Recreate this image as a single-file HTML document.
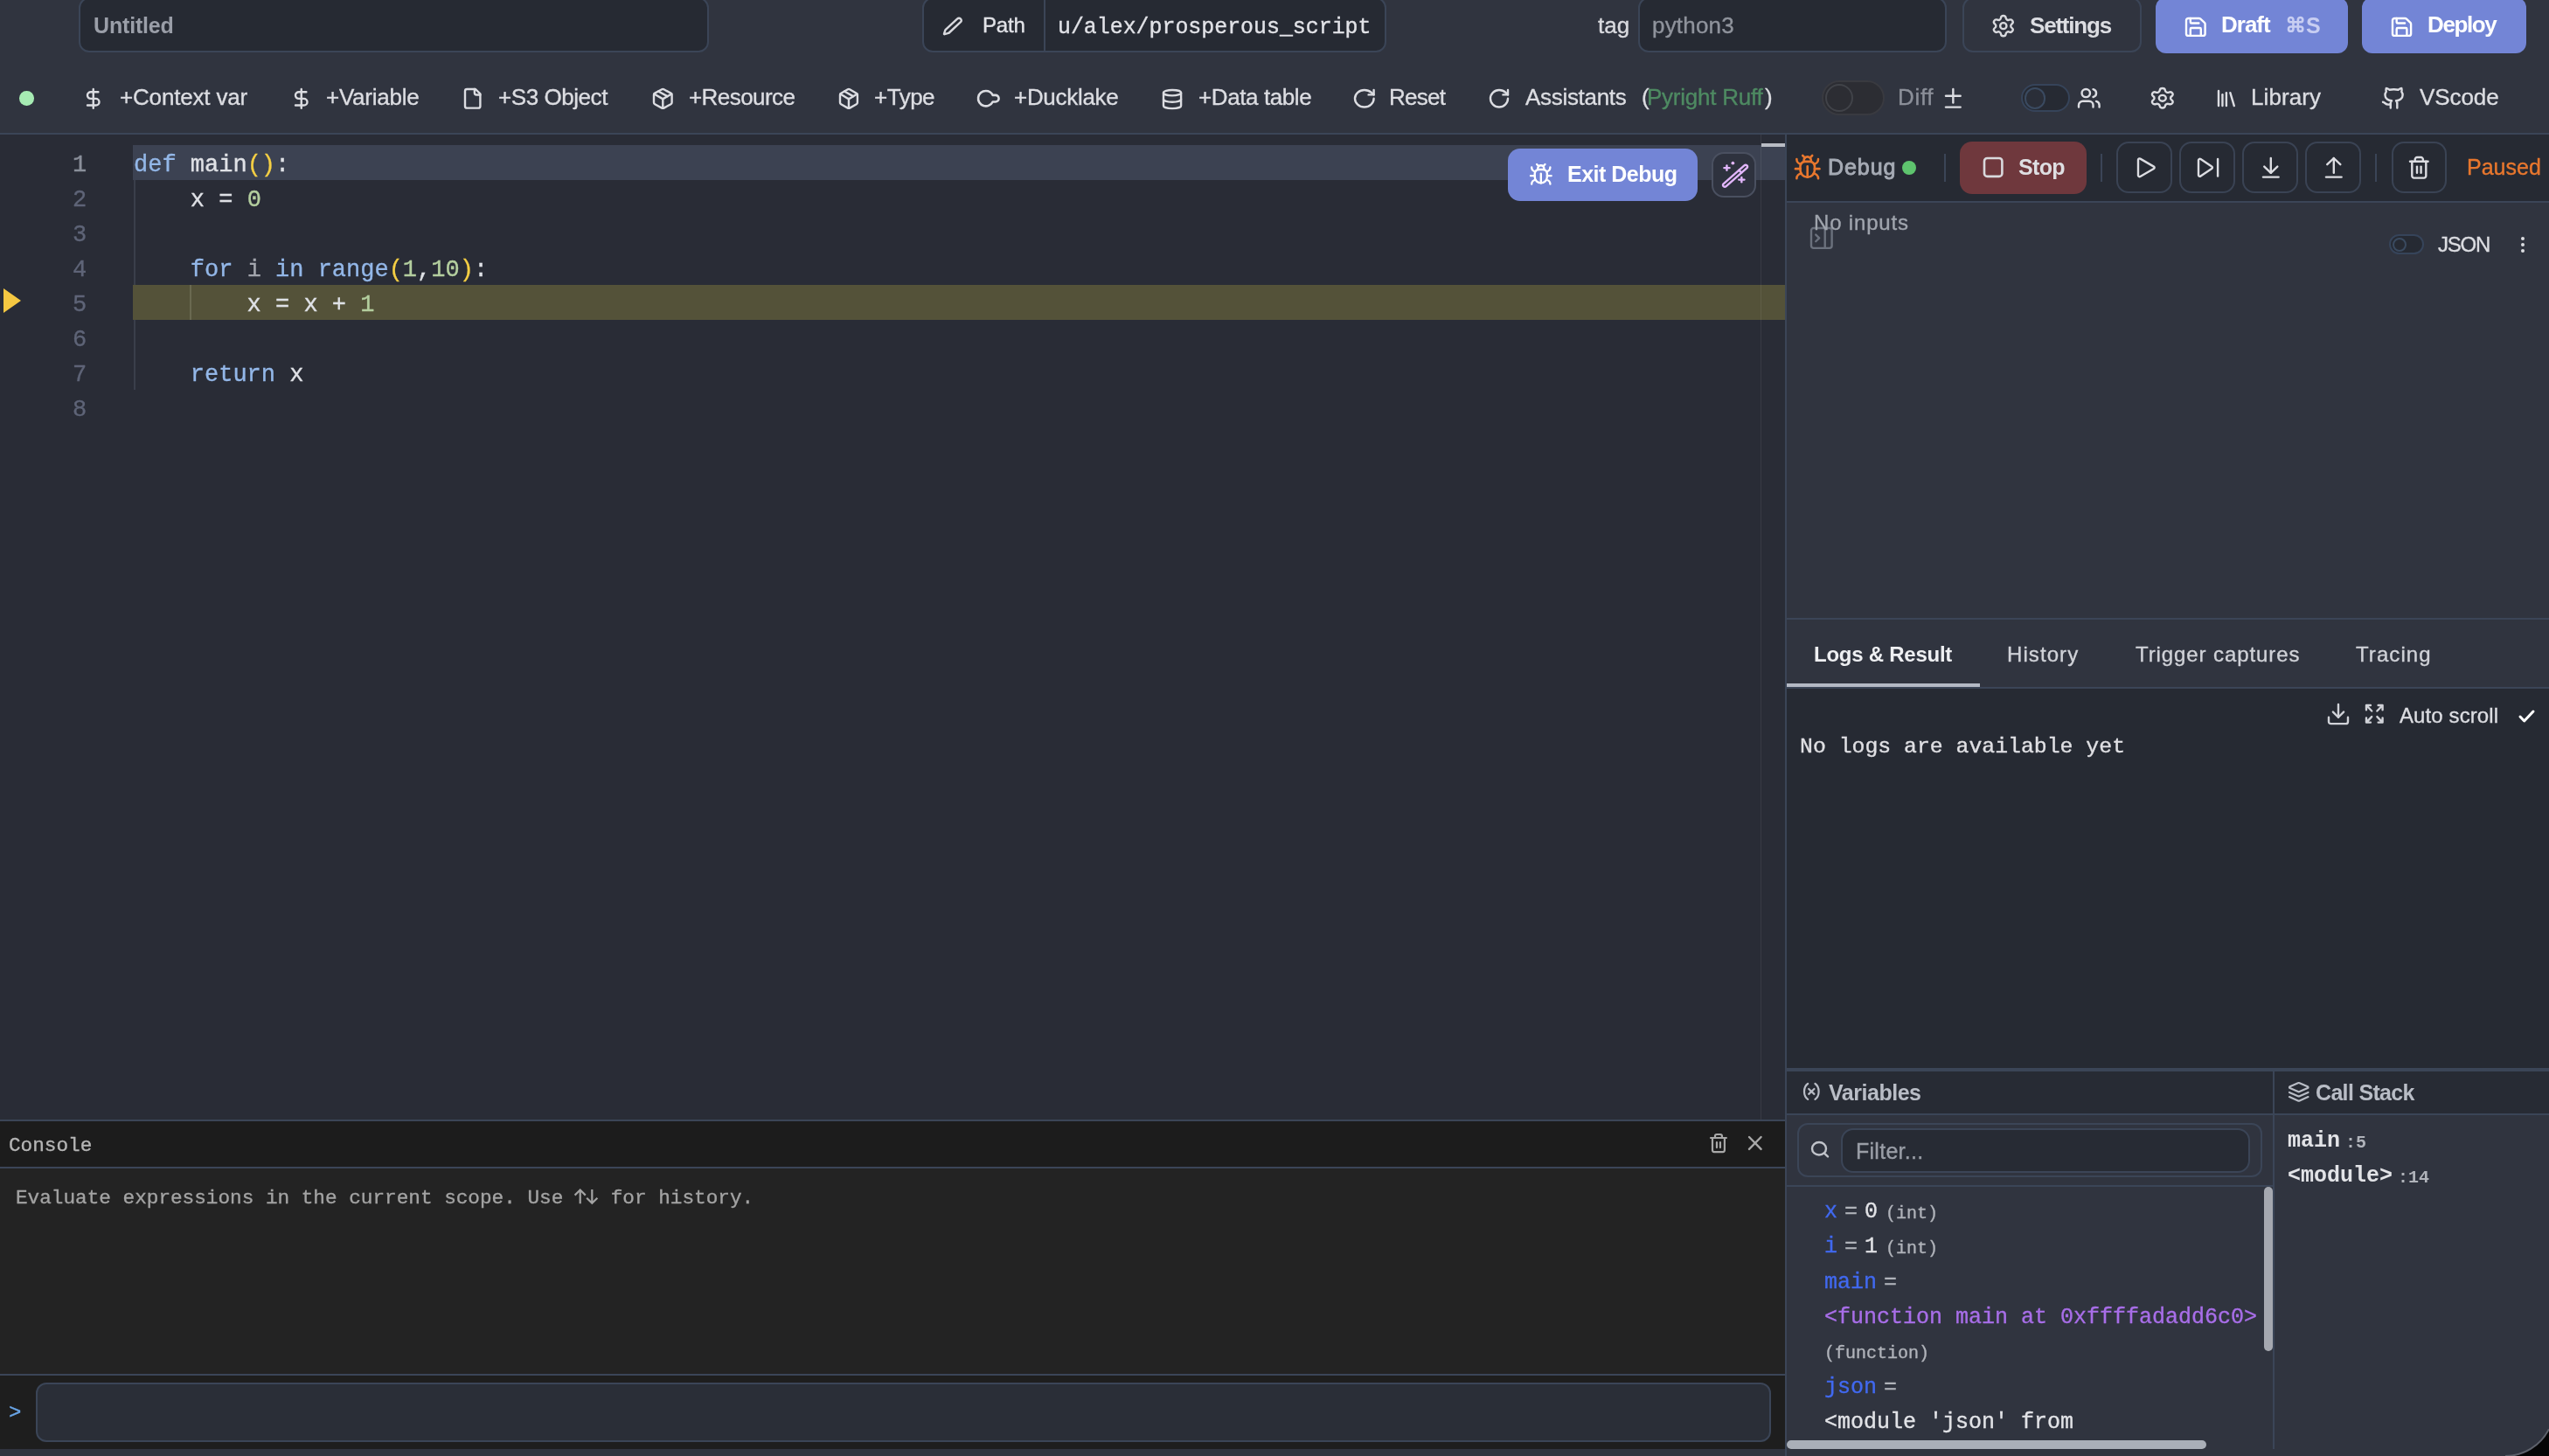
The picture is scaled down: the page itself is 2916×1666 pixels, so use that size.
<!DOCTYPE html>
<html><head><meta charset="utf-8"><title>Script editor debug</title>
<style>
html,body{margin:0;padding:0;}
body{width:2916px;height:1666px;overflow:hidden;position:relative;background:#30343f;font-family:"Liberation Sans",sans-serif;}
.b{position:absolute;box-sizing:border-box;}
.i{position:absolute;overflow:visible;}
.t{position:absolute;line-height:0;white-space:pre;-webkit-text-stroke:0.35px currentColor;will-change:transform;}
.m{font-family:"Liberation Mono",monospace;}
</style></head><body>
<div class="b" style="left:90px;top:-3px;width:721px;height:63px;background:#262a33;border:2px solid #3b4557;border-radius:12px;"></div>
<div class="t" style="left:107.30px;top:29.34px;font-size:25px;color:#9a9ea8;font-weight:700;letter-spacing:-0.17px;-webkit-text-stroke:0;">Untitled</div>
<div class="b" style="left:1055px;top:-3px;width:531px;height:63px;background:#262a33;border:2px solid #3b4557;border-radius:12px;"></div>
<div class="b" style="left:1193.5px;top:-3px;width:2.0px;height:63px;background:#3b4557;"></div>
<svg class="i" style="left:1080.20px;top:20.80px;width:19.60px;height:18.20px;" viewBox="2 2.2 19.8 19.8" preserveAspectRatio="none" fill="none" stroke="#d8d9de" stroke-width="2.4" stroke-linecap="round" stroke-linejoin="round"><path d="M21.174 6.812a1 1 0 0 0-3.986-3.987L3.842 16.174a2 2 0 0 0-.5.83l-1.321 4.352a.5.5 0 0 0 .623.622l4.353-1.32a2 2 0 0 0 .83-.497z" vector-effect="non-scaling-stroke"/></svg>
<div class="t" style="left:1124.00px;top:28.98px;font-size:24px;color:#e2e3e8;font-weight:400;letter-spacing:-0.17px;">Path</div>
<div class="t" style="left:1209.80px;top:31.36px;font-size:24.9px;color:#e2e3e8;font-weight:400;font-family:'Liberation Mono',monospace;">u/alex/prosperous_script</div>
<div class="t" style="left:1828.00px;top:28.69px;font-size:26px;color:#d9dadf;font-weight:400;">tag</div>
<div class="b" style="left:1874px;top:-3px;width:353px;height:63px;background:#262a33;border:2px solid #3b4557;border-radius:12px;"></div>
<div class="t" style="left:1889.50px;top:28.99px;font-size:26px;color:#8f939c;font-weight:400;letter-spacing:0.20px;">python3</div>
<div class="b" style="left:2245px;top:-3px;width:205px;height:63px;border:2px solid #3b4557;border-radius:12px;"></div>
<svg class="i" style="left:2281.20px;top:18.20px;width:21.60px;height:23.30px;" viewBox="3.1 2 17.799999999999997 20" preserveAspectRatio="none" fill="none" stroke="#d9dade" stroke-width="2.4" stroke-linecap="round" stroke-linejoin="round"><path d="M9.671 4.136a2.34 2.34 0 0 1 4.659 0 2.34 2.34 0 0 0 3.319 1.915 2.34 2.34 0 0 1 2.33 4.033 2.34 2.34 0 0 0 0 3.831 2.34 2.34 0 0 1-2.33 4.033 2.34 2.34 0 0 0-3.319 1.915 2.34 2.34 0 0 1-4.659 0 2.34 2.34 0 0 0-3.32-1.915 2.34 2.34 0 0 1-2.33-4.033 2.34 2.34 0 0 0 0-3.831A2.34 2.34 0 0 1 6.35 6.051a2.34 2.34 0 0 0 3.319-1.915" vector-effect="non-scaling-stroke"/><circle cx="12" cy="12" r="3" vector-effect="non-scaling-stroke"/></svg>
<div class="t" style="left:2322.00px;top:28.69px;font-size:26px;color:#dcdde2;font-weight:700;letter-spacing:-1.21px;-webkit-text-stroke:0;">Settings</div>
<div class="b" style="left:2466px;top:-3px;width:220px;height:64.3px;background:#7385d6;border-radius:12px;"></div>
<svg class="i" style="left:2501.20px;top:20.50px;width:21.60px;height:19.90px;" viewBox="3 3 18 18" preserveAspectRatio="none" fill="none" stroke="#ffffff" stroke-width="2.4" stroke-linecap="round" stroke-linejoin="round"><path d="M15.2 3a2 2 0 0 1 1.4.6l3.8 3.8a2 2 0 0 1 .6 1.4V19a2 2 0 0 1-2 2H5a2 2 0 0 1-2-2V5a2 2 0 0 1 2-2z" vector-effect="non-scaling-stroke"/><path d="M17 21v-7a1 1 0 0 0-1-1H8a1 1 0 0 0-1 1v7" vector-effect="non-scaling-stroke"/><path d="M7 3v4a1 1 0 0 0 1 1h7" vector-effect="non-scaling-stroke"/></svg>
<div class="t" style="left:2541.00px;top:28.19px;font-size:26px;color:#ffffff;font-weight:700;letter-spacing:-1.00px;-webkit-text-stroke:0;">Draft</div>
<svg class="i" style="left:2618.20px;top:20.10px;width:16.30px;height:15.80px;" viewBox="3 3 18 18" preserveAspectRatio="none" fill="none" stroke="#c8cef2" stroke-width="2.6" stroke-linecap="round" stroke-linejoin="round"><path d="M15 6v12a3 3 0 1 0 3-3H6a3 3 0 1 0 3 3V6a3 3 0 1 0-3 3h12a3 3 0 1 0-3-3" vector-effect="non-scaling-stroke"/></svg>
<div class="t" style="left:2638.00px;top:28.54px;font-size:25px;color:#c8cef2;font-weight:700;-webkit-text-stroke:0;">S</div>
<div class="b" style="left:2702px;top:-3px;width:188px;height:64.3px;background:#7385d6;border-radius:12px;"></div>
<svg class="i" style="left:2737.20px;top:20.50px;width:21.10px;height:19.90px;" viewBox="3 3 18 18" preserveAspectRatio="none" fill="none" stroke="#ffffff" stroke-width="2.4" stroke-linecap="round" stroke-linejoin="round"><path d="M15.2 3a2 2 0 0 1 1.4.6l3.8 3.8a2 2 0 0 1 .6 1.4V19a2 2 0 0 1-2 2H5a2 2 0 0 1-2-2V5a2 2 0 0 1 2-2z" vector-effect="non-scaling-stroke"/><path d="M17 21v-7a1 1 0 0 0-1-1H8a1 1 0 0 0-1 1v7" vector-effect="non-scaling-stroke"/><path d="M7 3v4a1 1 0 0 0 1 1h7" vector-effect="non-scaling-stroke"/></svg>
<div class="t" style="left:2777.00px;top:28.19px;font-size:26px;color:#ffffff;font-weight:700;letter-spacing:-1.40px;-webkit-text-stroke:0;">Deploy</div>
<div class="b" style="left:22px;top:104px;width:16.5px;height:16.5px;border-radius:50%;background:#a6ebb3"></div>
<svg class="i" style="left:100.30px;top:102.00px;width:13.50px;height:21.80px;" viewBox="6 2 12 20" preserveAspectRatio="none" fill="none" stroke="#dcdde2" stroke-width="2.4" stroke-linecap="round" stroke-linejoin="round"><path d="M12 2v20" vector-effect="non-scaling-stroke"/><path d="M17 5H9.5a3.5 3.5 0 0 0 0 7h5a3.5 3.5 0 0 1 0 7H6" vector-effect="non-scaling-stroke"/></svg>
<div class="t" style="left:136.80px;top:111.19px;font-size:26px;color:#dcdde2;font-weight:400;letter-spacing:-0.17px;">+Context var</div>
<svg class="i" style="left:338.20px;top:102.00px;width:13.50px;height:21.80px;" viewBox="6 2 12 20" preserveAspectRatio="none" fill="none" stroke="#dcdde2" stroke-width="2.4" stroke-linecap="round" stroke-linejoin="round"><path d="M12 2v20" vector-effect="non-scaling-stroke"/><path d="M17 5H9.5a3.5 3.5 0 0 0 0 7h5a3.5 3.5 0 0 1 0 7H6" vector-effect="non-scaling-stroke"/></svg>
<div class="t" style="left:373.00px;top:111.19px;font-size:26px;color:#dcdde2;font-weight:400;letter-spacing:-0.25px;">+Variable</div>
<svg class="i" style="left:532.30px;top:102.10px;width:17.40px;height:21.60px;" viewBox="4 2 16 20" preserveAspectRatio="none" fill="none" stroke="#dcdde2" stroke-width="2.4" stroke-linecap="round" stroke-linejoin="round"><path d="M15 2H6a2 2 0 0 0-2 2v16a2 2 0 0 0 2 2h12a2 2 0 0 0 2-2V7Z" vector-effect="non-scaling-stroke"/><path d="M14 2v4a2 2 0 0 0 2 2h4" vector-effect="non-scaling-stroke"/></svg>
<div class="t" style="left:570.00px;top:111.19px;font-size:26px;color:#dcdde2;font-weight:400;letter-spacing:-0.44px;">+S3 Object</div>
<svg class="i" style="left:748.20px;top:101.90px;width:20.60px;height:21.90px;" viewBox="3 2 18 20" preserveAspectRatio="none" fill="none" stroke="#dcdde2" stroke-width="2.4" stroke-linecap="round" stroke-linejoin="round"><path d="M11 21.73a2 2 0 0 0 2 0l7-4A2 2 0 0 0 21 16V8a2 2 0 0 0-1-1.73l-7-4a2 2 0 0 0-2 0l-7 4A2 2 0 0 0 3 8v8a2 2 0 0 0 1 1.73z" vector-effect="non-scaling-stroke"/><path d="M12 22V12" vector-effect="non-scaling-stroke"/><path d="m3.3 7 7.703 4.734a2 2 0 0 0 1.994 0L20.7 7" vector-effect="non-scaling-stroke"/><path d="m7.5 4.27 9 5.15" vector-effect="non-scaling-stroke"/></svg>
<div class="t" style="left:787.50px;top:111.19px;font-size:26px;color:#dcdde2;font-weight:400;letter-spacing:-0.56px;">+Resource</div>
<svg class="i" style="left:960.80px;top:101.90px;width:19.90px;height:21.90px;" viewBox="3 2 18 20" preserveAspectRatio="none" fill="none" stroke="#dcdde2" stroke-width="2.4" stroke-linecap="round" stroke-linejoin="round"><path d="M11 21.73a2 2 0 0 0 2 0l7-4A2 2 0 0 0 21 16V8a2 2 0 0 0-1-1.73l-7-4a2 2 0 0 0-2 0l-7 4A2 2 0 0 0 3 8v8a2 2 0 0 0 1 1.73z" vector-effect="non-scaling-stroke"/><path d="M12 22V12" vector-effect="non-scaling-stroke"/><path d="m3.3 7 7.703 4.734a2 2 0 0 0 1.994 0L20.7 7" vector-effect="non-scaling-stroke"/><path d="m7.5 4.27 9 5.15" vector-effect="non-scaling-stroke"/></svg>
<div class="t" style="left:1000.20px;top:111.19px;font-size:26px;color:#dcdde2;font-weight:400;letter-spacing:-0.50px;">+Type</div>
<svg class="i" style="left:1119.10px;top:104.30px;width:23.60px;height:17.40px;" viewBox="3 4 21.5 16" preserveAspectRatio="none" fill="none" stroke="#dcdde2" stroke-width="2.6" stroke-linecap="round" stroke-linejoin="round"><path d="M11 4a8 8 0 1 0 7.2 11.5H21a3.5 3.5 0 0 0 0-7h-2.8A8 8 0 0 0 11 4z" vector-effect="non-scaling-stroke"/></svg>
<div class="t" style="left:1159.80px;top:111.19px;font-size:26px;color:#dcdde2;font-weight:400;letter-spacing:-0.30px;">+Ducklake</div>
<svg class="i" style="left:1330.70px;top:102.70px;width:20.10px;height:21.10px;" viewBox="3 2 18 20" preserveAspectRatio="none" fill="none" stroke="#dcdde2" stroke-width="2.4" stroke-linecap="round" stroke-linejoin="round"><ellipse cx="12" cy="5" rx="9" ry="3" vector-effect="non-scaling-stroke"/><path d="M3 5V19A9 3 0 0 0 21 19V5" vector-effect="non-scaling-stroke"/><path d="M3 12A9 3 0 0 0 21 12" vector-effect="non-scaling-stroke"/></svg>
<div class="t" style="left:1371.00px;top:111.19px;font-size:26px;color:#dcdde2;font-weight:400;letter-spacing:-0.40px;">+Data table</div>
<svg class="i" style="left:1550.20px;top:103.10px;width:21.60px;height:19.50px;" viewBox="3 3 18 18" preserveAspectRatio="none" fill="none" stroke="#dcdde2" stroke-width="2.4" stroke-linecap="round" stroke-linejoin="round"><path d="M21 12a9 9 0 1 1-9-9c2.52 0 4.93 1 6.74 2.74L21 8" vector-effect="non-scaling-stroke"/><path d="M21 3v5h-5" vector-effect="non-scaling-stroke"/></svg>
<div class="t" style="left:1589.00px;top:111.19px;font-size:26px;color:#dcdde2;font-weight:400;letter-spacing:-0.75px;">Reset</div>
<svg class="i" style="left:1705.20px;top:103.10px;width:20.00px;height:19.50px;" viewBox="3 3 18 18" preserveAspectRatio="none" fill="none" stroke="#dcdde2" stroke-width="2.4" stroke-linecap="round" stroke-linejoin="round"><path d="M21 12a9 9 0 1 1-9-9c2.52 0 4.93 1 6.74 2.74L21 8" vector-effect="non-scaling-stroke"/><path d="M21 3v5h-5" vector-effect="non-scaling-stroke"/></svg>
<div class="t" style="left:1745.00px;top:111.19px;font-size:26px;color:#dcdde2;font-weight:400;letter-spacing:-0.31px;">Assistants</div>
<div class="t" style="left:1877.60px;top:111.19px;font-size:26px;color:#dcdde2;font-weight:400;">(</div>
<div class="t" style="left:1884.30px;top:111.19px;font-size:26px;color:#4e8a62;font-weight:400;letter-spacing:-0.24px;">Pyright Ruff</div>
<div class="t" style="left:2019.00px;top:111.19px;font-size:26px;color:#dcdde2;font-weight:400;">)</div>
<div class="b" style="left:2084px;top:92px;width:72px;height:39.5px;background:#2c2d33;border:2px solid #393a40;border-radius:20px;"></div>
<div class="b" style="left:2087.5px;top:95.5px;width:32.5px;height:32.5px;border-radius:50%;background:#2c2d33;border:2px solid #414349;box-sizing:border-box"></div>
<div class="t" style="left:2171.00px;top:111.19px;font-size:26px;color:#8b8f99;font-weight:400;letter-spacing:0.67px;">Diff</div>
<svg class="i" style="left:2225.70px;top:101.70px;width:16.70px;height:20.60px;" viewBox="7 3 10 16" preserveAspectRatio="none" fill="none" stroke="#dcdde2" stroke-width="2.4" stroke-linecap="round" stroke-linejoin="round"><path d="M12 3v12" vector-effect="non-scaling-stroke"/><path d="M7 9h10" vector-effect="non-scaling-stroke"/><path d="M7 19h10" vector-effect="non-scaling-stroke"/></svg>
<div class="b" style="left:2312px;top:96px;width:56px;height:32px;background:#262a33;border:2px solid #36445a;border-radius:16px;"></div>
<div class="b" style="left:2315.6px;top:99.8px;width:24.8px;height:24.8px;border-radius:50%;background:#2a2e38;border:2px solid #3a4a60;box-sizing:border-box"></div>
<svg class="i" style="left:2378.20px;top:102.20px;width:23.60px;height:20.60px;" viewBox="2 3 20 18" preserveAspectRatio="none" fill="none" stroke="#dcdde2" stroke-width="2.4" stroke-linecap="round" stroke-linejoin="round"><path d="M16 21v-2a4 4 0 0 0-4-4H6a4 4 0 0 0-4 4v2" vector-effect="non-scaling-stroke"/><circle cx="9" cy="7" r="4" vector-effect="non-scaling-stroke"/><path d="M22 21v-2a4 4 0 0 0-3-3.87" vector-effect="non-scaling-stroke"/><path d="M16 3.13a4 4 0 0 1 0 7.75" vector-effect="non-scaling-stroke"/></svg>
<svg class="i" style="left:2462.20px;top:101.20px;width:23.60px;height:22.60px;" viewBox="3.1 2 17.799999999999997 20" preserveAspectRatio="none" fill="none" stroke="#dcdde2" stroke-width="2.4" stroke-linecap="round" stroke-linejoin="round"><path d="M9.671 4.136a2.34 2.34 0 0 1 4.659 0 2.34 2.34 0 0 0 3.319 1.915 2.34 2.34 0 0 1 2.33 4.033 2.34 2.34 0 0 0 0 3.831 2.34 2.34 0 0 1-2.33 4.033 2.34 2.34 0 0 0-3.319 1.915 2.34 2.34 0 0 1-4.659 0 2.34 2.34 0 0 0-3.32-1.915 2.34 2.34 0 0 1-2.33-4.033 2.34 2.34 0 0 0 0-3.831A2.34 2.34 0 0 1 6.35 6.051a2.34 2.34 0 0 0 3.319-1.915" vector-effect="non-scaling-stroke"/><circle cx="12" cy="12" r="3" vector-effect="non-scaling-stroke"/></svg>
<svg class="i" style="left:2538.00px;top:104.20px;width:17.80px;height:17.10px;" viewBox="4 4 16 16" preserveAspectRatio="none" fill="none" stroke="#dcdde2" stroke-width="2.4" stroke-linecap="round" stroke-linejoin="round"><path d="m16 6 4 14" vector-effect="non-scaling-stroke"/><path d="M12 6v14" vector-effect="non-scaling-stroke"/><path d="M8 8v12" vector-effect="non-scaling-stroke"/><path d="M4 4v16" vector-effect="non-scaling-stroke"/></svg>
<div class="t" style="left:2575.00px;top:111.19px;font-size:26px;color:#dcdde2;font-weight:400;letter-spacing:0.08px;">Library</div>
<svg class="i" style="left:2726.20px;top:101.20px;width:22.60px;height:22.60px;" viewBox="2 2 18 20" preserveAspectRatio="none" fill="none" stroke="#dcdde2" stroke-width="2.4" stroke-linecap="round" stroke-linejoin="round"><path d="M15 22v-4a4.8 4.8 0 0 0-1-3.5c3 0 6-2 6-5.5.08-1.25-.27-2.48-1-3.5.28-1.15.28-2.35 0-3.5 0 0-1 0-3 1.5-2.64-.5-5.36-.5-8 0C6 2 5 2 5 2c-.3 1.15-.3 2.35 0 3.5A5.403 5.403 0 0 0 4 9c0 3.5 3 5.5 6 5.5-.39.49-.68 1.05-.85 1.65-.17.6-.22 1.23-.15 1.85v4" vector-effect="non-scaling-stroke"/><path d="M9 18c-4.51 2-5-2-7-2" vector-effect="non-scaling-stroke"/></svg>
<div class="t" style="left:2768.00px;top:111.19px;font-size:26px;color:#dcdde2;font-weight:400;letter-spacing:-0.08px;">VScode</div>
<div class="b" style="left:0px;top:152px;width:2916px;height:2px;background:#3b4557;"></div>
<div class="b" style="left:0px;top:154px;width:2042px;height:1127px;background:#292c36;"></div>
<div class="b" style="left:152px;top:166px;width:1890px;height:40px;background:#3c4252;"></div>
<div class="b" style="left:2015px;top:164px;width:27px;height:4px;background:#b9bcc4;"></div>
<div class="b" style="left:152.5px;top:206px;width:2.0px;height:240px;background:#3a3f4b;"></div>
<div class="b" style="left:152px;top:326px;width:1890px;height:40px;background:#545239;"></div>
<div class="b" style="left:217px;top:326px;width:2px;height:40px;background:#6a6950;"></div>
<div class="b" style="left:2014px;top:154px;width:1px;height:1127px;background:rgba(255,255,255,0.07);"></div>
<svg class="i" style="left:4px;top:330px;width:20px;height:28px" viewBox="0 0 20 28"><path d="M0 0L20 14L0 28Z" fill="#f5c842"/></svg>
<div class="t" style="left:83.00px;top:189.10px;font-size:27px;color:#8a8f9a;font-weight:400;font-family:'Liberation Mono',monospace;">1</div>
<div class="t" style="left:83.00px;top:229.10px;font-size:27px;color:#5e6477;font-weight:400;font-family:'Liberation Mono',monospace;">2</div>
<div class="t" style="left:83.00px;top:269.10px;font-size:27px;color:#5e6477;font-weight:400;font-family:'Liberation Mono',monospace;">3</div>
<div class="t" style="left:83.00px;top:309.10px;font-size:27px;color:#5e6477;font-weight:400;font-family:'Liberation Mono',monospace;">4</div>
<div class="t" style="left:83.00px;top:349.10px;font-size:27px;color:#5e6477;font-weight:400;font-family:'Liberation Mono',monospace;">5</div>
<div class="t" style="left:83.00px;top:389.10px;font-size:27px;color:#5e6477;font-weight:400;font-family:'Liberation Mono',monospace;">6</div>
<div class="t" style="left:83.00px;top:429.10px;font-size:27px;color:#5e6477;font-weight:400;font-family:'Liberation Mono',monospace;">7</div>
<div class="t" style="left:83.00px;top:469.10px;font-size:27px;color:#5e6477;font-weight:400;font-family:'Liberation Mono',monospace;">8</div>
<div class="t m" style="left:153px;top:189.10px;font-size:27px"><span style="color:#93b7e8">def</span><span style="color:#dfe1e6"> main</span><span style="color:#f5cf44">()</span><span style="color:#dfe1e6">:</span></div>
<div class="t m" style="left:153px;top:229.10px;font-size:27px"><span style="color:#dfe1e6">    x = </span><span style="color:#b4cf9f">0</span></div>
<div class="t m" style="left:153px;top:309.10px;font-size:27px"><span style="color:#93b7e8">    for</span><span style="color:#dfe1e6"> </span><span style="color:#a3a6ad">i</span><span style="color:#dfe1e6"> </span><span style="color:#93b7e8">in</span><span style="color:#dfe1e6"> </span><span style="color:#93b7e8">range</span><span style="color:#f5cf44">(</span><span style="color:#b4cf9f">1</span><span style="color:#dfe1e6">,</span><span style="color:#b4cf9f">10</span><span style="color:#f5cf44">)</span><span style="color:#dfe1e6">:</span></div>
<div class="t m" style="left:153px;top:349.10px;font-size:27px"><span style="color:#dfe1e6">        x = x + </span><span style="color:#b4cf9f">1</span></div>
<div class="t m" style="left:153px;top:429.10px;font-size:27px"><span style="color:#dfe1e6">    </span><span style="color:#93b7e8">return</span><span style="color:#dfe1e6"> x</span></div>
<div class="b" style="left:1725px;top:170px;width:217px;height:60px;background:#7385d6;border-radius:14px;"></div>
<svg class="i" style="left:1751.20px;top:188.20px;width:23.60px;height:22.60px;" viewBox="2 2 20 19" preserveAspectRatio="none" fill="none" stroke="#ffffff" stroke-width="2.4" stroke-linecap="round" stroke-linejoin="round"><path d="m8 2 1.88 1.88" vector-effect="non-scaling-stroke"/><path d="M14.12 3.88 16 2" vector-effect="non-scaling-stroke"/><path d="M9 7.13v-1a3.003 3.003 0 1 1 6 0v1" vector-effect="non-scaling-stroke"/><path d="M12 20c-3.3 0-6-2.7-6-6v-3a4 4 0 0 1 4-4h4a4 4 0 0 1 4 4v3c0 3.3-2.7 6-6 6" vector-effect="non-scaling-stroke"/><path d="M12 20v-9" vector-effect="non-scaling-stroke"/><path d="M6.53 9C4.6 8.8 3 7.1 3 5" vector-effect="non-scaling-stroke"/><path d="M6 13H2" vector-effect="non-scaling-stroke"/><path d="M3 21c0-2.1 1.7-3.9 3.8-4" vector-effect="non-scaling-stroke"/><path d="M20.97 5c0 2.1-1.6 3.8-3.5 4" vector-effect="non-scaling-stroke"/><path d="M22 13h-4" vector-effect="non-scaling-stroke"/><path d="M17.2 17c2.1.1 3.8 1.9 3.8 4" vector-effect="non-scaling-stroke"/></svg>
<div class="t" style="left:1793.00px;top:199.34px;font-size:25px;color:#ffffff;font-weight:700;letter-spacing:-0.50px;-webkit-text-stroke:0;">Exit Debug</div>
<div class="b" style="left:1958px;top:174px;width:51px;height:52px;background:#2e323e;border:2px solid #4a5060;border-radius:14px;"></div>
<svg class="i" style="left:1971.20px;top:186.20px;width:28.10px;height:27.60px;" viewBox="3.1 2.5 18.299999999999997 20.4" preserveAspectRatio="none" fill="none" stroke="#e2b6fb" stroke-width="2.4" stroke-linecap="round" stroke-linejoin="round"><path d="M3.5 20.5 L19 5 a1.4 1.4 0 0 1 2 2 L5.5 22.5 a1.4 1.4 0 0 1 -2 -2z" vector-effect="non-scaling-stroke"/><path d="M15 9l2 2" vector-effect="non-scaling-stroke"/><path d="M6 5v4" vector-effect="non-scaling-stroke"/><path d="M4 7h4" vector-effect="non-scaling-stroke"/><path d="M17 15v4" vector-effect="non-scaling-stroke"/><path d="M15 17h4" vector-effect="non-scaling-stroke"/><path d="M10.5 2.5v1" vector-effect="non-scaling-stroke"/><path d="M10 3h1" vector-effect="non-scaling-stroke"/></svg>
<div class="b" style="left:2042px;top:154px;width:2px;height:1512px;background:#3b4557;"></div>
<div class="b" style="left:2044px;top:154px;width:872px;height:76px;background:#262a33;"></div>
<div class="b" style="left:2044px;top:230px;width:872px;height:2px;background:#3b4557;"></div>
<div class="b" style="left:2044px;top:232px;width:872px;height:475px;background:#30343f;"></div>
<div class="b" style="left:2044px;top:707px;width:872px;height:2px;background:#3b4557;"></div>
<div class="b" style="left:2044px;top:709px;width:872px;height:77px;background:#30343f;"></div>
<div class="b" style="left:2044px;top:782px;width:221px;height:4px;background:#b4b9c4;"></div>
<div class="b" style="left:2044px;top:786px;width:872px;height:2px;background:#3b4557;"></div>
<div class="b" style="left:2044px;top:788px;width:872px;height:434px;background:#262a33;"></div>
<div class="b" style="left:2044px;top:1222px;width:872px;height:4px;background:#3b4557;"></div>
<div class="b" style="left:2044px;top:1226px;width:872px;height:48px;background:#272b34;"></div>
<div class="b" style="left:2044px;top:1274px;width:872px;height:2px;background:#3b4557;"></div>
<div class="b" style="left:2044px;top:1276px;width:556px;height:80px;background:#30343f;"></div>
<div class="b" style="left:2044px;top:1356px;width:556px;height:2px;background:#3b4557;"></div>
<div class="b" style="left:2044px;top:1358px;width:556px;height:300px;background:#30343f;"></div>
<div class="b" style="left:2602px;top:1276px;width:314px;height:382px;background:#30343f;"></div>
<div class="b" style="left:2600px;top:1226px;width:2px;height:432px;background:#3b4557;"></div>
<div class="b" style="left:2044px;top:1658px;width:872px;height:8px;background:#30343f;"></div>
<svg class="i" style="left:2054.30px;top:177.90px;width:27.40px;height:26.20px;" viewBox="2 2 20 19" preserveAspectRatio="none" fill="none" stroke="#e8772e" stroke-width="2.6" stroke-linecap="round" stroke-linejoin="round"><path d="m8 2 1.88 1.88" vector-effect="non-scaling-stroke"/><path d="M14.12 3.88 16 2" vector-effect="non-scaling-stroke"/><path d="M9 7.13v-1a3.003 3.003 0 1 1 6 0v1" vector-effect="non-scaling-stroke"/><path d="M12 20c-3.3 0-6-2.7-6-6v-3a4 4 0 0 1 4-4h4a4 4 0 0 1 4 4v3c0 3.3-2.7 6-6 6" vector-effect="non-scaling-stroke"/><path d="M12 20v-9" vector-effect="non-scaling-stroke"/><path d="M6.53 9C4.6 8.8 3 7.1 3 5" vector-effect="non-scaling-stroke"/><path d="M6 13H2" vector-effect="non-scaling-stroke"/><path d="M3 21c0-2.1 1.7-3.9 3.8-4" vector-effect="non-scaling-stroke"/><path d="M20.97 5c0 2.1-1.6 3.8-3.5 4" vector-effect="non-scaling-stroke"/><path d="M22 13h-4" vector-effect="non-scaling-stroke"/><path d="M17.2 17c2.1.1 3.8 1.9 3.8 4" vector-effect="non-scaling-stroke"/></svg>
<div class="t" style="left:2090.60px;top:191.14px;font-size:25px;color:#a6abb5;font-weight:400;letter-spacing:0.93px;-webkit-text-stroke:0.9px currentColor;">Debug</div>
<div class="b" style="left:2176px;top:184px;width:16.3px;height:16.3px;border-radius:50%;background:#5ec46e"></div>
<div class="b" style="left:2224px;top:176px;width:2px;height:32px;background:#3b4557;"></div>
<div class="b" style="left:2242px;top:162px;width:145px;height:60px;background:#6f383d;border-radius:14px;"></div>
<svg class="i" style="left:2269.70px;top:181.30px;width:20.40px;height:20.90px;" viewBox="3 3 18 18" preserveAspectRatio="none" fill="none" stroke="#d9d9dd" stroke-width="2.6" stroke-linecap="round" stroke-linejoin="round"><rect width="18" height="18" x="3" y="3" rx="3" vector-effect="non-scaling-stroke"/></svg>
<div class="t" style="left:2309.00px;top:191.34px;font-size:25px;color:#dedee2;font-weight:700;letter-spacing:-0.67px;-webkit-text-stroke:0;">Stop</div>
<div class="b" style="left:2403px;top:176px;width:2px;height:32px;background:#3b4557;"></div>
<div class="b" style="left:2421px;top:162px;width:64px;height:59px;border:2px solid #3a4354;border-radius:14px;"></div>
<div class="b" style="left:2493px;top:162px;width:64px;height:59px;border:2px solid #3a4354;border-radius:14px;"></div>
<div class="b" style="left:2565px;top:162px;width:64px;height:59px;border:2px solid #3a4354;border-radius:14px;"></div>
<div class="b" style="left:2637px;top:162px;width:64px;height:59px;border:2px solid #3a4354;border-radius:14px;"></div>
<svg class="i" style="left:2446.20px;top:181.20px;width:18.60px;height:21.60px;" viewBox="6 3 14 18" preserveAspectRatio="none" fill="none" stroke="#dcdde2" stroke-width="2.4" stroke-linecap="round" stroke-linejoin="round"><path d="M6 4.5 a1.2 1.2 0 0 1 1.8-1 L19.5 11 a1.2 1.2 0 0 1 0 2 L7.8 20.5 a1.2 1.2 0 0 1-1.8-1z" vector-effect="non-scaling-stroke"/></svg>
<svg class="i" style="left:2515.20px;top:182.20px;width:22.10px;height:19.60px;" viewBox="4 4.5 16 15.0" preserveAspectRatio="none" fill="none" stroke="#dcdde2" stroke-width="2.4" stroke-linecap="round" stroke-linejoin="round"><path d="M4 5.5 a1.2 1.2 0 0 1 1.8-1 L15 11 a1.2 1.2 0 0 1 0 2 L5.8 19.5 a1.2 1.2 0 0 1-1.8-1z" vector-effect="non-scaling-stroke"/><path d="M20 4.5v15" vector-effect="non-scaling-stroke"/></svg>
<svg class="i" style="left:2589.20px;top:181.20px;width:17.60px;height:21.60px;" viewBox="5 3 14 18" preserveAspectRatio="none" fill="none" stroke="#dcdde2" stroke-width="2.4" stroke-linecap="round" stroke-linejoin="round"><path d="M12 17V3" vector-effect="non-scaling-stroke"/><path d="m6 11 6 6 6-6" vector-effect="non-scaling-stroke"/><path d="M19 21H5" vector-effect="non-scaling-stroke"/></svg>
<svg class="i" style="left:2661.20px;top:181.20px;width:17.60px;height:21.60px;" viewBox="5 3 14 18" preserveAspectRatio="none" fill="none" stroke="#dcdde2" stroke-width="2.4" stroke-linecap="round" stroke-linejoin="round"><path d="m18 9-6-6-6 6" vector-effect="non-scaling-stroke"/><path d="M12 3v14" vector-effect="non-scaling-stroke"/><path d="M5 21h14" vector-effect="non-scaling-stroke"/></svg>
<div class="b" style="left:2717px;top:176px;width:2px;height:32px;background:#3b4557;"></div>
<div class="b" style="left:2736px;top:162px;width:63px;height:59px;border:2px solid #3a4354;border-radius:14px;"></div>
<svg class="i" style="left:2757.20px;top:180.20px;width:20.60px;height:23.60px;" viewBox="3 2 18 20" preserveAspectRatio="none" fill="none" stroke="#dcdde2" stroke-width="2.4" stroke-linecap="round" stroke-linejoin="round"><path d="M3 6h18" vector-effect="non-scaling-stroke"/><path d="M19 6v14c0 1-1 2-2 2H7c-1 0-2-1-2-2V6" vector-effect="non-scaling-stroke"/><path d="M8 6V4c0-1 1-2 2-2h4c1 0 2 1 2 2v2" vector-effect="non-scaling-stroke"/><path d="M10 11v6" vector-effect="non-scaling-stroke"/><path d="M14 11v6" vector-effect="non-scaling-stroke"/></svg>
<div class="t" style="left:2822.00px;top:191.34px;font-size:25px;color:#e8772e;font-weight:400;">Paused</div>
<svg class="i" style="left:2072.20px;top:260.70px;width:23.60px;height:22.90px;" viewBox="3 3 18 18" preserveAspectRatio="none" fill="none" stroke="#6b717d" stroke-width="2.4" stroke-linecap="round" stroke-linejoin="round"><rect width="18" height="18" x="3" y="3" rx="2" vector-effect="non-scaling-stroke"/><path d="M15 3v18" vector-effect="non-scaling-stroke"/><path d="m7 9 3 3-3 3" vector-effect="non-scaling-stroke"/></svg>
<div class="t" style="left:2075.40px;top:255.28px;font-size:24px;color:#a0a5ae;font-weight:400;letter-spacing:0.82px;">No inputs</div>
<div class="b" style="left:2733px;top:268.2px;width:40px;height:23.30000000000001px;background:#262a33;border:2px solid #36445a;border-radius:12px;"></div>
<div class="b" style="left:2736.9px;top:272.3px;width:16px;height:16px;border-radius:50%;border:2px solid #3a4a60;box-sizing:border-box"></div>
<div class="t" style="left:2789.00px;top:279.98px;font-size:24px;color:#dcdde2;font-weight:400;letter-spacing:-1.23px;">JSON</div>
<div class="b" style="left:2883.9px;top:271.09999999999997px;width:4.2px;height:4.2px;border-radius:50%;background:#dcdde2"></div>
<div class="b" style="left:2883.9px;top:278.2px;width:4.2px;height:4.2px;border-radius:50%;background:#dcdde2"></div>
<div class="b" style="left:2883.9px;top:285.29999999999995px;width:4.2px;height:4.2px;border-radius:50%;background:#dcdde2"></div>
<div class="t" style="left:2075.00px;top:749.38px;font-size:24px;color:#eeeff2;font-weight:700;letter-spacing:-0.25px;-webkit-text-stroke:0;">Logs &amp; Result</div>
<div class="t" style="left:2296.00px;top:749.38px;font-size:24px;color:#d0d2d8;font-weight:400;letter-spacing:1.08px;">History</div>
<div class="t" style="left:2443.00px;top:749.38px;font-size:24px;color:#d0d2d8;font-weight:400;letter-spacing:0.91px;">Trigger captures</div>
<div class="t" style="left:2694.60px;top:749.38px;font-size:24px;color:#d0d2d8;font-weight:400;letter-spacing:1.07px;">Tracing</div>
<svg class="i" style="left:2663.80px;top:806.20px;width:22.00px;height:22.10px;" viewBox="3 3 18 18" preserveAspectRatio="none" fill="none" stroke="#d0d2d8" stroke-width="2.4" stroke-linecap="round" stroke-linejoin="round"><path d="M21 15v4a2 2 0 0 1-2 2H5a2 2 0 0 1-2-2v-4" vector-effect="non-scaling-stroke"/><path d="m7 10 5 5 5-5" vector-effect="non-scaling-stroke"/><path d="M12 15V3" vector-effect="non-scaling-stroke"/></svg>
<svg class="i" style="left:2707.20px;top:807.20px;width:18.60px;height:19.60px;" viewBox="3 3 18 18" preserveAspectRatio="none" fill="none" stroke="#d0d2d8" stroke-width="2.4" stroke-linecap="round" stroke-linejoin="round"><path d="m21 21-6-6m6 6v-4.8m0 4.8h-4.8" vector-effect="non-scaling-stroke"/><path d="M3 16.2V21m0 0h4.8M3 21l6-6" vector-effect="non-scaling-stroke"/><path d="M21 7.8V3m0 0h-4.8M21 3l-6 6" vector-effect="non-scaling-stroke"/><path d="M3 7.8V3m0 0h4.8M3 3l6 6" vector-effect="non-scaling-stroke"/></svg>
<div class="t" style="left:2745.00px;top:819.38px;font-size:24px;color:#dcdde2;font-weight:400;letter-spacing:0.10px;">Auto scroll</div>
<svg class="i" style="left:2882.50px;top:813.50px;width:15.00px;height:11.00px;" viewBox="4 6 16 11" preserveAspectRatio="none" fill="none" stroke="#ffffff" stroke-width="3" stroke-linecap="round" stroke-linejoin="round"><path d="M20 6 9 17l-5-5" vector-effect="non-scaling-stroke"/></svg>
<div class="t" style="left:2058.60px;top:854.09px;font-size:24.8px;color:#e0e0e4;font-weight:400;font-family:'Liberation Mono',monospace;">No logs are available yet</div>
<svg class="i" style="left:2063.60px;top:1239.90px;width:16.60px;height:17.80px;" viewBox="4 3 16 18" preserveAspectRatio="none" fill="none" stroke="#b9bdc6" stroke-width="2.2" stroke-linecap="round" stroke-linejoin="round"><path d="M8 21s-4-3-4-9 4-9 4-9" vector-effect="non-scaling-stroke"/><path d="M16 3s4 3 4 9-4 9-4 9" vector-effect="non-scaling-stroke"/><path d="M15 9l-6 6" vector-effect="non-scaling-stroke"/><path d="M9 9l6 6" vector-effect="non-scaling-stroke"/></svg>
<div class="t" style="left:2092.40px;top:1249.74px;font-size:25px;color:#b9bdc6;font-weight:700;letter-spacing:-0.48px;-webkit-text-stroke:0;">Variables</div>
<svg class="i" style="left:2619.10px;top:1239.10px;width:21.50px;height:20.60px;" viewBox="2 2 20 20" preserveAspectRatio="none" fill="none" stroke="#b9bdc6" stroke-width="2.2" stroke-linecap="round" stroke-linejoin="round"><path d="M12.83 2.18a2 2 0 0 0-1.66 0L2.6 6.08a1 1 0 0 0 0 1.83l8.58 3.91a2 2 0 0 0 1.66 0l8.58-3.9a1 1 0 0 0 0-1.83Z" vector-effect="non-scaling-stroke"/><path d="m22 17.65-9.17 4.16a2 2 0 0 1-1.66 0L2 17.65" vector-effect="non-scaling-stroke"/><path d="m22 12.65-9.17 4.16a2 2 0 0 1-1.66 0L2 12.65" vector-effect="non-scaling-stroke"/></svg>
<div class="t" style="left:2649.40px;top:1249.74px;font-size:25px;color:#b9bdc6;font-weight:700;letter-spacing:-0.67px;-webkit-text-stroke:0;">Call Stack</div>
<div class="b" style="left:2056px;top:1285px;width:532px;height:62px;border:2px solid #3b4557;border-radius:12px;"></div>
<div class="b" style="left:2106px;top:1290.5px;width:468px;height:51.0px;background:#272b34;border:2px solid #3b4557;border-radius:14px;"></div>
<svg class="i" style="left:2073.20px;top:1307.20px;width:18.00px;height:16.40px;" viewBox="3 3 18 18" preserveAspectRatio="none" fill="none" stroke="#c0c3ca" stroke-width="2.4" stroke-linecap="round" stroke-linejoin="round"><circle cx="11" cy="11" r="8" vector-effect="non-scaling-stroke"/><path d="m21 21-4.3-4.3" vector-effect="non-scaling-stroke"/></svg>
<div class="t" style="left:2123.30px;top:1316.54px;font-size:25px;color:#9a9ea7;font-weight:400;letter-spacing:0.27px;">Filter...</div>
<div class="b" style="left:2044px;top:1358px;width:546px;height:288px;overflow:hidden">
<div class="t m" style="left:43px;top:29.34px;font-size:25px;color:#4169f0;font-weight:400">x</div>
<div class="t m" style="left:66px;top:29.34px;font-size:25px;color:#b0b3ba;font-weight:400">=</div>
<div class="t m" style="left:89px;top:29.34px;font-size:25px;color:#e2e3e7;font-weight:400">0</div>
<div class="t m" style="left:113px;top:30.67px;font-size:20px;color:#b0b3ba;font-weight:400">(int)</div>
<div class="t m" style="left:43px;top:69.34px;font-size:25px;color:#4169f0;font-weight:400">i</div>
<div class="t m" style="left:66px;top:69.34px;font-size:25px;color:#b0b3ba;font-weight:400">=</div>
<div class="t m" style="left:89px;top:69.34px;font-size:25px;color:#e2e3e7;font-weight:400">1</div>
<div class="t m" style="left:113px;top:70.67px;font-size:20px;color:#b0b3ba;font-weight:400">(int)</div>
<div class="t m" style="left:43px;top:109.94px;font-size:25px;color:#4169f0;font-weight:400">main</div>
<div class="t m" style="left:111px;top:109.94px;font-size:25px;color:#b0b3ba;font-weight:400">=</div>
<div class="t m" style="left:43px;top:149.94px;font-size:25px;color:#a86ee8;font-weight:400">&lt;function main at 0xffffadadd6c0&gt;</div>
<div class="t m" style="left:43px;top:191.17px;font-size:20px;color:#b0b3ba;font-weight:400">(function)</div>
<div class="t m" style="left:43px;top:229.84px;font-size:25px;color:#4169f0;font-weight:400">json</div>
<div class="t m" style="left:111px;top:229.84px;font-size:25px;color:#b0b3ba;font-weight:400">=</div>
<div class="t m" style="left:43px;top:269.84px;font-size:25px;color:#e2e3e7;font-weight:400">&lt;module &#x27;json&#x27; from</div>
<div class="t m" style="left:43px;top:309.84px;font-size:25px;color:#e2e3e7;font-weight:400">&#x27;/usr/lib/python3&#x27;</div>
</div>
<div class="b" style="left:2590px;top:1358px;width:10px;height:188px;background:#a5a8b0;border-radius:5px;"></div>
<div class="b" style="left:2044px;top:1648px;width:480px;height:10px;background:#aaafb8;border-radius:5px;"></div>
<div class="t" style="left:2617.00px;top:1306.34px;font-size:25px;color:#e2e3e7;font-weight:700;font-family:'Liberation Mono',monospace;-webkit-text-stroke:0;">main</div>
<div class="t" style="left:2683.00px;top:1307.67px;font-size:20px;color:#b0b3ba;font-weight:700;font-family:'Liberation Mono',monospace;-webkit-text-stroke:0;">:5</div>
<div class="t" style="left:2617.00px;top:1346.34px;font-size:25px;color:#e2e3e7;font-weight:700;font-family:'Liberation Mono',monospace;-webkit-text-stroke:0;">&lt;module&gt;</div>
<div class="t" style="left:2742.70px;top:1347.67px;font-size:20px;color:#b0b3ba;font-weight:700;font-family:'Liberation Mono',monospace;-webkit-text-stroke:0;">:14</div>
<div class="b" style="left:0px;top:1281px;width:2042px;height:2px;background:#3b4557;"></div>
<div class="b" style="left:0px;top:1283px;width:2042px;height:52px;background:#1c1c1c;"></div>
<div class="b" style="left:0px;top:1335px;width:2042px;height:2px;background:#3b4557;"></div>
<div class="b" style="left:0px;top:1337px;width:2042px;height:235px;background:#232323;"></div>
<div class="b" style="left:0px;top:1572px;width:2042px;height:2px;background:#3b4557;"></div>
<div class="b" style="left:0px;top:1574px;width:2042px;height:84px;background:#1e1e1e;"></div>
<div class="b" style="left:0px;top:1658px;width:2042px;height:8px;background:#30343f;"></div>
<div class="t" style="left:9.60px;top:1310.95px;font-size:22.7px;color:#b5b5b5;font-weight:400;font-family:'Liberation Mono',monospace;">Console</div>
<svg class="i" style="left:1957.00px;top:1297.90px;width:17.90px;height:20.10px;" viewBox="3 2 18 20" preserveAspectRatio="none" fill="none" stroke="#a8a8a8" stroke-width="2.2" stroke-linecap="round" stroke-linejoin="round"><path d="M3 6h18" vector-effect="non-scaling-stroke"/><path d="M19 6v14c0 1-1 2-2 2H7c-1 0-2-1-2-2V6" vector-effect="non-scaling-stroke"/><path d="M8 6V4c0-1 1-2 2-2h4c1 0 2 1 2 2v2" vector-effect="non-scaling-stroke"/><path d="M10 11v6" vector-effect="non-scaling-stroke"/><path d="M14 11v6" vector-effect="non-scaling-stroke"/></svg>
<svg class="i" style="left:2001.20px;top:1301.00px;width:13.60px;height:13.90px;" viewBox="6 6 12 12" preserveAspectRatio="none" fill="none" stroke="#a8a8a8" stroke-width="2.4" stroke-linecap="round" stroke-linejoin="round"><path d="M18 6 6 18" vector-effect="non-scaling-stroke"/><path d="m6 6 12 12" vector-effect="non-scaling-stroke"/></svg>
<div class="t" style="left:17.80px;top:1371.05px;font-size:22.7px;color:#a3a3a3;font-weight:400;font-family:'Liberation Mono',monospace;">Evaluate expressions in the current scope. Use    for history.</div>
<svg class="i" style="left:655px;top:1359px;width:32px;height:20px" viewBox="655 1359 32 20" fill="none" stroke="#a3a3a3" stroke-width="2.2" stroke-linecap="butt" stroke-linejoin="miter"><path d="M663.7 1361.5V1377.3M657.6 1367.6l6.1-6.1 6.1 6.1"/><path d="M677.3 1361V1376.8M671.2 1370.7l6.1 6.1 6.1-6.1"/></svg>
<div class="t" style="left:10.00px;top:1616.60px;font-size:24px;color:#6aa6e8;font-weight:400;font-family:'Liberation Mono',monospace;">&gt;</div>
<div class="b" style="left:41px;top:1582px;width:1985px;height:68px;background:#2a2e37;border:2px solid #3b4557;border-radius:12px;"></div>
<svg class="i" style="left:2836px;top:1606px;width:80px;height:60px" viewBox="0 0 80 60"><path d="M80 29.2 A56 56 0 0 1 30 60 L80 60Z" fill="#050506"/><path d="M80 29.2 A56 56 0 0 1 30 60" fill="none" stroke="#5d616b" stroke-width="2"/></svg>
</body></html>
